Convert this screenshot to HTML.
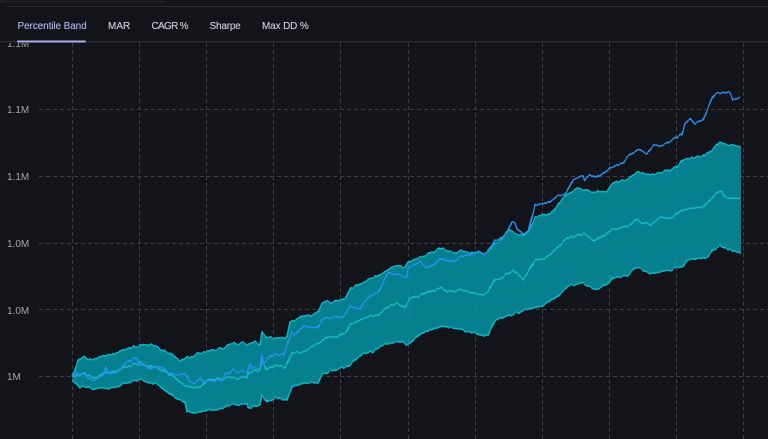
<!DOCTYPE html>
<html><head><meta charset="utf-8"><style>
html,body{margin:0;padding:0;background:#131419;width:768px;height:439px;overflow:hidden}
body{position:relative;font-family:"Liberation Sans",sans-serif}
.t{position:absolute;top:20px;font-size:10px;line-height:13px;color:#c9ccd3;white-space:nowrap;font-weight:400;text-shadow:0 0 .5px rgba(201,204,211,.7)}
svg{position:absolute;left:0;top:0}
</style></head><body>
<svg width="768" height="439" viewBox="0 0 768 439">
<defs>
<filter id="w" filterUnits="userSpaceOnUse" x="0" y="0" width="768" height="439" color-interpolation-filters="sRGB">
<feTurbulence type="fractalNoise" baseFrequency="0.22 0.012" numOctaves="2" seed="7" result="n"/>
<feColorMatrix in="n" type="matrix" values="0 0 0 0 .5  0 1 0 0 0  0 0 0 0 .5  0 0 0 0 1" result="m"/>
<feDisplacementMap in="SourceGraphic" in2="m" scale="5" xChannelSelector="R" yChannelSelector="G" result="d"/>
<feGaussianBlur in="d" stdDeviation="0.3"/>
</filter>
</defs>
<rect x="0" y="-8" width="165" height="10" rx="3" fill="#15161b" stroke="#26272d"/>
<rect x="7" y="6" width="761" height="1" fill="#2c2d33"/>
<g stroke="#3e3f44" stroke-width="1" stroke-dasharray="4 3" fill="none">
<path d="M39 109.5H768M39 176.5H768M39 243.5H768M39 309.5H768M39 376.5H768"/>
<path d="M72.5 43V439M139.5 43V439M206.5 43V439M273.5 43V439M340.5 43V439M408.5 43V439M475.5 43V439M542.5 43V439M609.5 43V439M676.5 43V439M743.5 43V439"/>
</g>
<g filter="url(#w)">
<path fill="#0593a3" fill-opacity=".85" stroke="none" d="M72 376L74 372 78 360 85 357 88 360 95 358 105 355 115 353 125 350 130 348 139 346 143 344 150 345 158 347 163 351 170 353 176 358 180 361 186 357 190 358 197 353 206 352 215 350 224 348 230 344 240 343 247 344 255 342 260 345 262 332 268 338 277 338 287 337 290 322 296 320 305 315 310 316 318 312 322 303 335 301 345 299 350 289 362 282 373 278 387 270 393 266 405 267 408 262 422 257 430 253 442 248 453 253 460 251 467 252 487 253 495 243 500 240 510 230 520 235 528 233 535 217 547 215 555 208 563 198 577 188 585 190 595 193 607 191 613 183 628 179 637 172 650 175 663 172 677 167 683 159 702 157 712 150 720 141 727 145 741 147 741 253 730 250 720 246 713 250 708 257 687 260 683 267 670 270 663 271 650 274 637 267 627 276 613 277 607 285 595 289 583 283 568 286 562 292 550 302 535 308 510 315 495 321 488 335 480 335 463 330 442 326 422 333 407 345 403 342 388 343 372 352 362 354 348 367 333 370 322 374 318 383 305 383 292 387 287 400 275 398 268 402 262 395 260 405 248 408 247 404 230 405 217 410 208 410 195 413 187 412 185 402 173 397 162 388 159 385 147 382 140 380 127 383 110 388 95 388 80 387 73 380Z"/>
<g fill="none" stroke-width="1.5" stroke-linejoin="round">
<path stroke="#10b4c6" d="M72 376L74 372 78 360 85 357 88 360 95 358 105 355 115 353 125 350 130 348 139 346 143 344 150 345 158 347 163 351 170 353 176 358 180 361 186 357 190 358 197 353 206 352 215 350 224 348 230 344 240 343 247 344 255 342 260 345 262 332 268 338 277 338 287 337 290 322 296 320 305 315 310 316 318 312 322 303 335 301 345 299 350 289 362 282 373 278 387 270 393 266 405 267 408 262 422 257 430 253 442 248 453 253 460 251 467 252 487 253 495 243 500 240 510 230 520 235 528 233 535 217 547 215 555 208 563 198 577 188 585 190 595 193 607 191 613 183 628 179 637 172 650 175 663 172 677 167 683 159 702 157 712 150 720 141 727 145 741 147"/>
<path stroke="#10b4c6" d="M72 380L73 380 80 387 95 388 110 388 127 383 140 380 147 382 159 385 162 388 173 397 185 402 187 412 195 413 208 410 217 410 230 405 247 404 248 408 260 405 262 395 268 402 275 398 287 400 292 387 305 383 318 383 322 374 333 370 348 367 362 354 372 352 388 343 403 342 407 345 422 333 442 326 463 330 480 335 488 335 495 321 510 315 535 308 550 302 562 292 568 286 583 283 595 289 607 285 613 277 627 276 637 267 650 274 663 271 670 270 683 267 687 260 708 257 713 250 720 246 730 250 741 253"/>
<path stroke="#12bccb" d="M72 376L80 374 90 376 97 377 105 372 118 370 130 366 140 363 148 366 158 368 165 372 175 378 180 382 188 387 200 387 210 380 225 378 247 378 248 373 260 370 262 360 267 370 273 366 285 367 292 353 300 353 312 347 320 342 327 337 335 337 347 332 350 325 363 318 378 315 387 307 395 304 405 307 410 299 420 296 442 287 448 292 460 290 467 291 480 295 488 292 495 280 500 280 513 270 523 280 528 273 535 260 545 259 558 247 568 238 583 234 595 241 612 230 628 226 637 220 650 225 660 218 673 217 682 210 703 207 717 193 722 192 725 197 740 199"/>
<path stroke="#2590ee" d="M72 376L76 372 79 376 85 373 88 379 95 379 103 375 106 366 108 372 112 373 120 370 127 362 137 358 139 366 145 365 150 369 157 367 160 366 170 374 178 375 185 373 190 382 195 383 200 378 203 382 223 380 225 373 228 375 233 370 247 373 250 363 252 369 260 368 262 355 263 363 273 355 283 355 292 332 295 335 305 325 308 327 317 328 322 320 332 317 343 317 350 307 360 308 365 300 378 292 388 272 397 275 407 277 408 268 420 262 427 269 442 258 452 262 458 258 477 252 487 253 495 240 500 238 507 233 512 222 515 222 517 228 522 233 528 232 535 205 543 205 548 202 558 195 565 195 573 180 583 175 585 180 590 175 597 178 610 168 623 163 627 157 637 150 647 153 653 146 663 145 673 140 682 133 685 123 690 118 695 125 703 120 712 99 715 94 719 92 730 93 733 100 740 96"/>
</g>
</g>
<text x="7" y="47" font-family="Liberation Sans" font-size="10" fill="#a3a5ab">1.1M</text>
<g font-family="Liberation Sans" font-size="10" fill="#a3a5ab">
<text x="7" y="113">1.1M</text>
<text x="7" y="180">1.1M</text>
<text x="7" y="247">1.0M</text>
<text x="7" y="314">1.0M</text>
<text x="7" y="380">1M</text>
</g>
<rect x="0" y="32" width="768" height="11" fill="#131419"/>
<rect x="0" y="41" width="768" height="1.4" fill="#2a2b30"/>
<rect x="17" y="40.5" width="69" height="2" rx="1" fill="#a9b2f2"/>
</svg>
<div class="t" style="left:17.5px;color:#a7b1ee;letter-spacing:-.1px;text-shadow:0 0 .5px rgba(167,177,238,.7)">Percentile Band</div>
<div class="t" style="left:108px">MAR</div>
<div class="t" style="left:151.5px;letter-spacing:-.7px">CAGR %</div>
<div class="t" style="left:209.5px;letter-spacing:-.2px">Sharpe</div>
<div class="t" style="left:262px;letter-spacing:-.15px">Max DD %</div>
</body></html>
